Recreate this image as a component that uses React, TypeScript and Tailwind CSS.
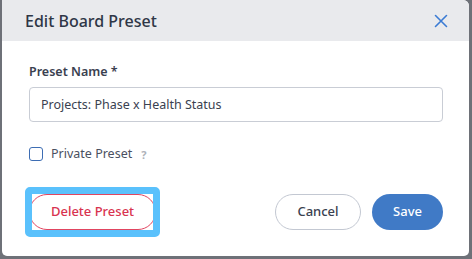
import React from 'react';

export default function App() {
  return (
    <div
      className="w-[472px] h-[259px] bg-[#6e7178] pl-[2px] pr-[3px] pb-[3px]"
      style={{ fontFamily: '"Noto Sans", "Open Sans", sans-serif' }}
    >
      <div className="h-full bg-white rounded-tr-[6px] rounded-b-[5px] overflow-hidden flex flex-col">
        {/* header */}
        <div className="h-[41px] bg-[#e9eaed] flex items-center justify-between pl-[23px] pr-[21px] shrink-0">
          <h2 className="text-[16px] font-medium text-[#2e3646] leading-none">Edit Board Preset</h2>
          <button className="w-[14px] h-[14px] flex items-center justify-center text-[#3b7bd4]">
            <svg width="14" height="14" viewBox="0 0 14 14" fill="none" stroke="currentColor" strokeWidth="1.6" strokeLinecap="round">
              <path d="M1.5 1.5 L12.5 12.5 M12.5 1.5 L1.5 12.5" />
            </svg>
          </button>
        </div>

        {/* body */}
        <div className="flex-1 pt-[22px] pl-[27px] pr-[26px] pb-[18px] flex flex-col">
          <label className="text-[12.5px] font-semibold text-[#3a4150] leading-[18px]">Preset Name *</label>
          <input
            readOnly
            value="Projects: Phase x Health Status"
            className="mt-[6px] h-[35px] w-full rounded-[4px] border border-[#c9cdd5] px-[11px] text-[12.5px] text-[#3a4150] outline-none"
          />

          <div className="mt-[25px] flex items-center h-[14px]">
            <span className="w-[14px] h-[14px] rounded-[3px] border-[1.5px] border-[#3d6db3] bg-white shrink-0" />
            <span className="ml-[8px] text-[12.5px] text-[#4a5060] leading-none">Private Preset</span>
            <span className="ml-[9px] text-[11px] font-bold text-[#aeb2b9] leading-none">?</span>
          </div>

          <div className="mt-[26px] flex items-center justify-between">
            <div className="-ml-[4px] rounded-[5px] border-[7px] border-[#5ac1fc] bg-white overflow-hidden w-[135px] h-[50px]">
              <button className="-ml-[3px] w-[127px] h-[36px] rounded-full border border-[#e14560] text-[13px] font-medium text-[#d8334f] bg-white">
                Delete Preset
              </button>
            </div>
            <div className="flex items-center gap-[11px]">
              <button className="w-[86px] h-[36px] rounded-full border border-[#c3c8d2] bg-white text-[13px] font-medium text-[#3a4150]">
                Cancel
              </button>
              <button className="w-[71px] h-[36px] rounded-full bg-[#407ac6] text-[13px] font-medium text-white">
                Save
              </button>
            </div>
          </div>
        </div>
      </div>
    </div>
  );
}
